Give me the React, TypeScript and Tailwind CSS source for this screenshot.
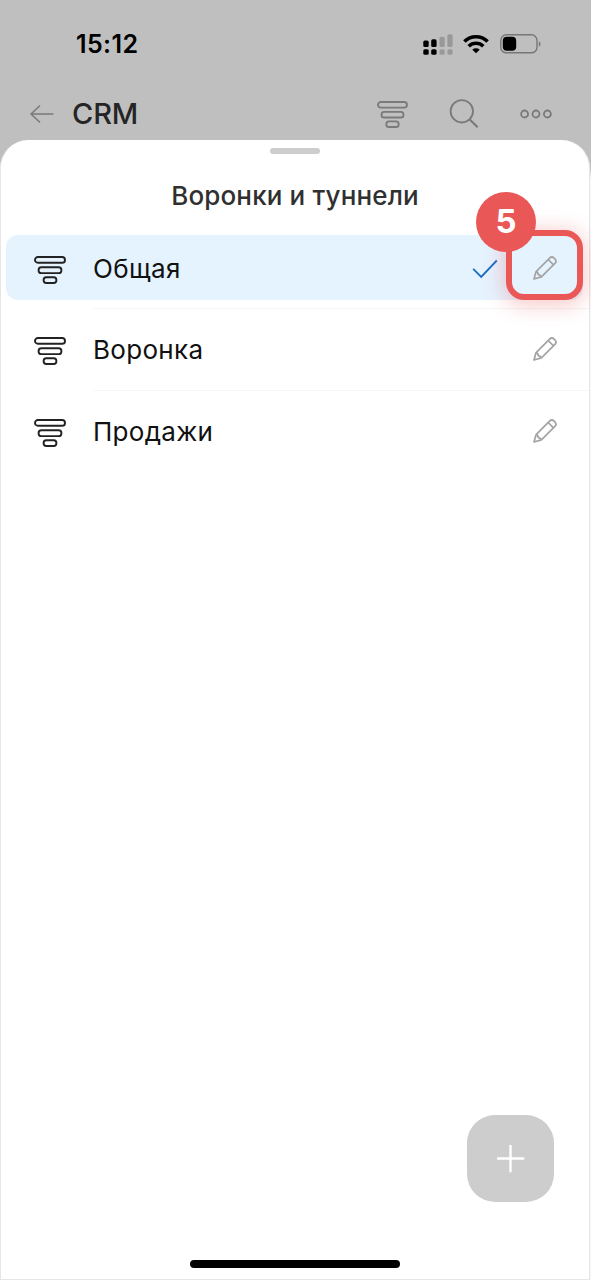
import { clsx } from 'clsx';

type Funnel = {
  id: number;
  name: string;
  active?: boolean;
};

const funnels: Funnel[] = [
  { id: 1, name: 'Общая', active: true },
  { id: 2, name: 'Воронка' },
  { id: 3, name: 'Продажи' },
];

function FunnelIcon({ className }: { className?: string }) {
  return (
    <svg viewBox="0 0 32 28" fill="none" stroke="currentColor" strokeWidth="1.9" className={className}>
      <rect x="1" y="1" width="30" height="5.8" rx="2.9" />
      <rect x="4.6" y="11.3" width="22.8" height="5.8" rx="2.7" />
      <rect x="9.6" y="21.2" width="12.8" height="5.8" rx="2.7" />
    </svg>
  );
}

function PencilIcon() {
  return (
    <svg
      viewBox="0 0 24 24"
      fill="none"
      stroke="currentColor"
      strokeWidth="1.7"
      strokeLinejoin="round"
      className="h-6 w-6"
    >
      <path d="M1 23 3.1 15.6 16.6 2.1a3.2 3.2 0 0 1 4.5 0l.8.8a3.2 3.2 0 0 1 0 4.5L8.4 20.9Z" />
      <path d="m15.2 3.5 5.3 5.3M3.1 15.6c1.6.3 2 .7 2.2 3 1.7.1 2.4.7 3.1 2.3" />
    </svg>
  );
}

function StatusBar() {
  return (
    <div className="flex h-[88px] items-center justify-between pr-[50px] pl-[76px]">
      <span className="mt-[2px] text-[25px] font-semibold tracking-[0.4px] text-black">15:12</span>
      <div className="flex items-center">
        {/* Dual SIM signal */}
        <svg viewBox="0 0 30 21" className="h-[21px] w-[30px]">
          <g fill="#000">
            <rect x="0.3" y="6.6" width="5.4" height="6.4" rx="1.6" />
            <rect x="8.2" y="5.3" width="5.4" height="7.7" rx="1.6" />
            <rect x="0.3" y="15.2" width="5.4" height="5.6" rx="1.6" />
            <rect x="8.2" y="15.2" width="5.4" height="5.6" rx="1.6" />
          </g>
          <g fill="#999">
            <rect x="16.5" y="2.7" width="5.2" height="10.3" rx="1.6" />
            <rect x="24.4" y="0.2" width="5.2" height="12.8" rx="1.6" />
            <rect x="16.5" y="15.2" width="5.2" height="5.6" rx="1.6" />
            <rect x="24.4" y="15.2" width="5.2" height="5.6" rx="1.6" />
          </g>
        </svg>
        <svg viewBox="0 0 26 20" className="ml-[10px] h-5 w-[26px]" fill="none" stroke="#000" strokeWidth="3.5">
          <path d="M1.4 7.4a16.5 16.5 0 0 1 23.2 0" />
          <path d="M5.7 12.3a10.4 10.4 0 0 1 14.6 0" />
          <path d="M13 19.3 9.3 15.8a5.4 5.4 0 0 1 7.4 0Z" fill="#000" stroke="none" />
        </svg>
        <svg viewBox="0 0 41 20" className="ml-[11px] h-5 w-[41px]">
          <rect x="0.8" y="0.8" width="36.2" height="18" rx="5.6" fill="none" stroke="#777" strokeWidth="1.4" />
          <rect x="2.8" y="2.8" width="13.4" height="14" rx="4" fill="#000" />
          <path d="M38.8 7.2c2.3 1 2.3 4.4 0 5.4Z" fill="#777" />
        </svg>
      </div>
    </div>
  );
}

function NavBar() {
  return (
    <div className="flex h-[52px] items-center pr-[39px] pl-[30px] text-[#7a7a7a]">
      <svg
        viewBox="0 0 24 18"
        fill="none"
        stroke="currentColor"
        strokeWidth="1.6"
        strokeLinecap="round"
        strokeLinejoin="round"
        className="h-[18px] w-6"
      >
        <path d="M9.5 1 1 9l8.5 8M1 9h22" />
      </svg>
      <span className="ml-[18px] text-[29px] font-medium tracking-[-0.1px] text-[#252525]">CRM</span>
      <div className="ml-auto flex items-center">
        <FunnelIcon className="h-[27px] w-[31px]" />
        <svg viewBox="0 0 30 30" fill="none" stroke="currentColor" strokeWidth="1.8" className="ml-[41px] h-[30px] w-[30px]">
          <circle cx="12.8" cy="12.3" r="11.2" />
          <path d="m20.8 20.5 7.8 7.8" strokeWidth="2.2" />
        </svg>
        <svg viewBox="0 0 32 10" fill="none" stroke="currentColor" strokeWidth="1.8" className="ml-[41px] h-[10px] w-8">
          <circle cx="4.6" cy="5" r="3.5" />
          <circle cx="16" cy="5" r="3.5" />
          <circle cx="27.4" cy="5" r="3.5" />
        </svg>
      </div>
    </div>
  );
}

function FunnelRow({ funnel, last }: { funnel: Funnel; last: boolean }) {
  return (
    <li className="flex h-[81.5px] flex-col">
      <div
        className={clsx(
          'relative mr-[6px] ml-[5px] flex h-[65px] items-center rounded-xl pr-[26px] pl-7',
          funnel.active && 'bg-[#e5f3ff]'
        )}
      >
        <FunnelIcon className="mt-1 h-[28px] w-8 text-[#222]" />
        <span className="mt-[2px] ml-[27px] text-[26px] leading-8 tracking-[0.3px] text-[#111]">{funnel.name}</span>
        <div className="ml-auto flex items-center text-[#a3a3a3]">
          {funnel.active && (
            <svg viewBox="0 0 26 20" fill="none" stroke="#1c6fc4" strokeWidth="1.9" className="mt-[2px] mr-[35px] h-5 w-[26px]">
              <path d="m1.2 9.8 8 8L24.8 1.5" />
            </svg>
          )}
          <PencilIcon />
        </div>
        {/* Step marker */}
        {funnel.active && (
          <>
            <div className="absolute top-[-5px] right-0 h-[70px] w-[77px] rounded-[18px] border-[6px] border-[#ea5757] shadow-[0_3px_20px_3px_rgba(234,87,87,0.3)]" />
            <div className="absolute top-[-43px] right-[47px] flex h-[60px] w-[60px] items-center justify-center rounded-full bg-[#ea5757] text-[33px] font-bold text-white">
              5
            </div>
          </>
        )}
      </div>
      {!last && <div className="mt-[8px] ml-[92px] h-px bg-[#f5f5f5]" />}
    </li>
  );
}

export default function App() {
  return (
    <div className="flex h-[1280px] w-[591px] flex-col bg-linear-to-b from-[#bfbfbf] from-[13%] to-[#f8f8f8] to-[14%] font-[Inter,sans-serif]">
      <StatusBar />
      <NavBar />
      <div className="mr-px flex flex-1 flex-col rounded-t-[28px] border border-t-0 border-[#e6e6e6] bg-white">
        <div className="mx-auto mt-2 h-[6px] w-[50px] rounded-full bg-[#cdcdcd]" />
        <h1 className="mt-[25px] text-center text-[26px] leading-[34px] font-medium tracking-[0.15px] text-[#303030]">
          Воронки и туннели
        </h1>
        <ul className="mt-[22px]">
          {funnels.map((funnel, i) => (
            <FunnelRow key={funnel.id} funnel={funnel} last={i === funnels.length - 1} />
          ))}
        </ul>
        <button className="mt-auto mr-[35px] flex h-[87px] w-[87px] items-center justify-center self-end rounded-[28px] bg-[#cdcdcd]">
          <svg viewBox="0 0 28 28" stroke="#fff" strokeWidth="2.4" strokeLinecap="round" className="h-7 w-7">
            <path d="M13.5 .7v25.6M.7 13.5h25.6" />
          </svg>
        </button>
        <div className="mx-auto mt-[58px] mb-[11px] h-2 w-[210px] rounded-full bg-black" />
      </div>
    </div>
  );
}
